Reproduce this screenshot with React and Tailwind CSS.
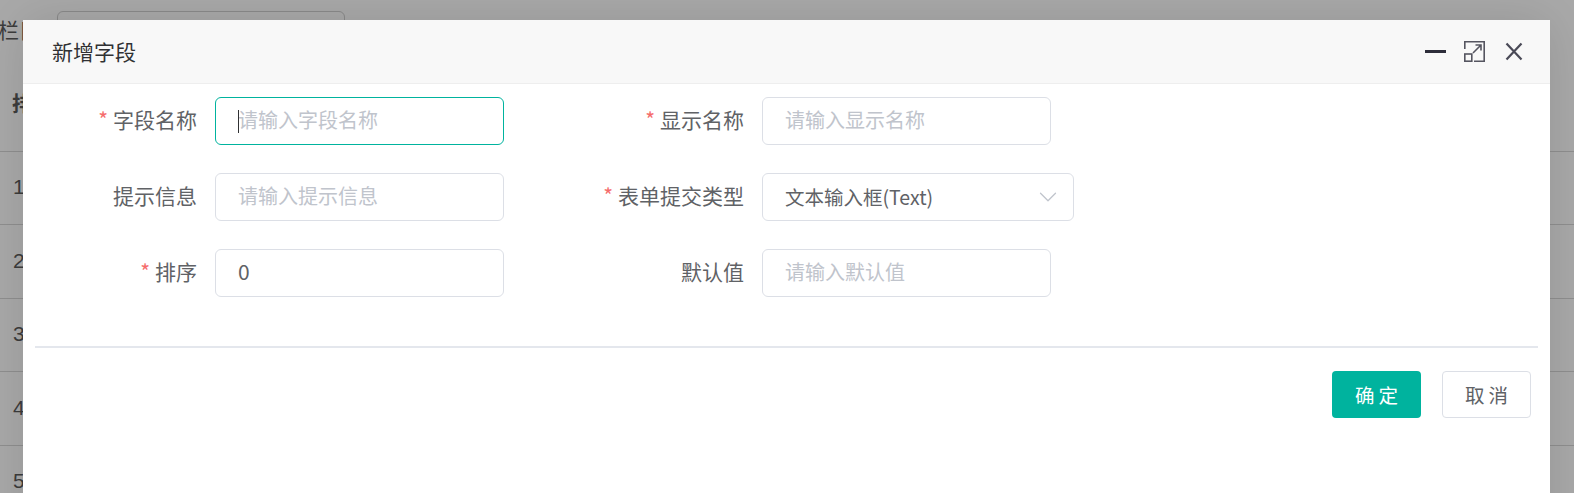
import { ChevronDown } from 'lucide-react'

const font = { fontFamily: '"Noto Sans CJK SC", "Liberation Sans", sans-serif' }

function Field({ label, required, children, labelWidth }) {
  return (
    <div className="flex items-center h-12">
      <label className={`${labelWidth} shrink-0 flex justify-end items-center pr-[18px] pb-[2px] text-[21px] text-[#606266]`}>
        {required && <span className="text-[#f56c6c] mr-[5px]">*</span>}
        {label}
      </label>
      {children}
    </div>
  )
}

function TextInput({ placeholder, value, focused, caret }) {
  return (
    <div className={`relative w-[289px] h-12 rounded-[6px] border bg-white pl-[22px] pb-[2px] flex items-center text-[20px] ${focused ? 'border-[#00b39e]' : 'border-[#dcdfe6]'}`}>
      {caret && <span className="absolute left-[22px] top-[12px] w-px h-[23px] bg-[#303133]"></span>}
      {value ? <span className="text-[21px] text-[#606266]">{value}</span> : <span className="text-[#c0c4cc]">{placeholder}</span>}
    </div>
  )
}

function PageBehind() {
  return (
    <div className="h-full text-[21px] text-[#3c3c3c]">
      <div className="h-[151px]">
        <div className="flex items-start pt-[11px]">
          <span className="w-[59px] pt-[3px] -ml-[2px] shrink-0 whitespace-nowrap overflow-hidden">栏目</span>
          <div className="w-[288px] h-12 rounded-[6px] border border-[#8a8a8a]"></div>
        </div>
        <div className="pl-[12px] pt-[28px] font-bold">排序</div>
      </div>
      {['1', '2', '3', '4', '5'].map(n => (
        <div key={n} className="h-[73.4px] border-t border-[#8f8f8f] pl-[13px] pb-[2px] flex items-center" style={{ fontFamily: '"Liberation Sans", sans-serif' }}>
          {n}
        </div>
      ))}
    </div>
  )
}

export default function App() {
  return (
    <div className="relative w-[1574px] h-[493px] overflow-hidden bg-[#a9a9a9]" style={font}>
      <PageBehind />

      <div className="absolute left-[23px] top-[20px] w-[1527px] h-[600px] bg-white rounded-t-[3px] shadow-[0_0_50px_rgba(0,0,0,0.12)]">
        {/* header */}
        <div className="h-[64px] bg-[#f8f8f8] border-b border-[#eeeeee] pl-[29px] pr-[27px] flex items-center justify-between">
          <span className="text-[21px] text-[#303133]">新增字段</span>
          <div className="flex items-center text-[#4a4a57]">
            <span className="w-[21px] h-[3px] bg-[#2d2d3a] mr-[18px]"></span>
            <svg width="21" height="21" viewBox="0 0 21 21" fill="none" stroke="#555560" strokeWidth="1.6" className="mr-[20px]">
              <path d="M0.8 8V0.8H20.2V20.2H10" />
              <rect x="0.8" y="13" width="7" height="7.2" />
              <path d="M9 12L17 4M11.5 4H17V9.5" />
            </svg>
            <svg width="18" height="19" viewBox="0 0 18 19" fill="none" stroke="#4a4a57" strokeWidth="2.2">
              <path d="M1.5 1.5L16.5 17.5M16.5 1.5L1.5 17.5" />
            </svg>
          </div>
        </div>

        {/* form */}
        <div className="pt-[13px] flex">
          <div className="flex flex-col gap-7">
            <Field label="字段名称" required labelWidth="w-[192px]">
              <TextInput placeholder="请输入字段名称" focused caret />
            </Field>
            <Field label="提示信息" labelWidth="w-[192px]">
              <TextInput placeholder="请输入提示信息" />
            </Field>
            <Field label="排序" required labelWidth="w-[192px]">
              <TextInput value="0" />
            </Field>
          </div>
          <div className="flex flex-col gap-7 ml-[69px]">
            <Field label="显示名称" required labelWidth="w-[189px]">
              <TextInput placeholder="请输入显示名称" />
            </Field>
            <Field label="表单提交类型" required labelWidth="w-[189px]">
              <div className="w-[312px] h-12 rounded-[6px] border border-[#dcdfe6] pl-[22px] pr-[10px] flex items-center justify-between text-[19.5px] text-[#606266]">
                <span>文本输入框(Text)</span>
                <ChevronDown size={30} strokeWidth={1} className="text-[#c0c4cc]" />
              </div>
            </Field>
            <Field label="默认值" labelWidth="w-[189px]">
              <TextInput placeholder="请输入默认值" />
            </Field>
          </div>
        </div>

        {/* footer */}
        <div className="mx-[12px] mt-[49px] h-[2px] bg-[#e4e7ed]"></div>
        <div className="flex justify-end gap-[21px] pt-[23px] pr-[19px]">
          <button className="w-[89px] h-[47px] rounded-[4px] bg-[#00b39e] text-white text-[19.5px] tracking-[4px] pl-[4px]">确定</button>
          <button className="w-[89px] h-[47px] rounded-[4px] border border-[#dcdfe6] bg-white text-[#606266] text-[19.5px] tracking-[4px] pl-[4px]">取消</button>
        </div>
      </div>
    </div>
  )
}
